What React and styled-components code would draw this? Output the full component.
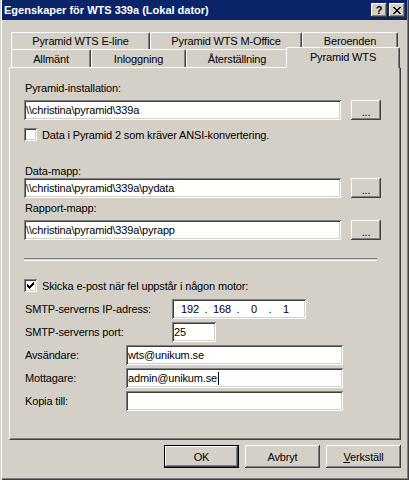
import styled, { createGlobalStyle } from "styled-components"

const GlobalStyle = createGlobalStyle`
  html, body {
    margin: 0;
    padding: 0;
    background: #D4D0C8;
  }
  body {
    font-family: "Liberation Sans", Arial, sans-serif;
    font-size: 11px;
    color: #000;
  }
`

const raised = `
  box-shadow: inset -1px -1px #404040, inset 1px 1px #ffffff,
    inset -2px -2px #808080, inset 2px 2px #D4D0C8;
`

const sunken = `
  box-shadow: inset 1px 1px #808080, inset -1px -1px #ffffff,
    inset 2px 2px #404040, inset -2px -2px #D4D0C8;
`

const Window = styled.div`
  width: 409px;
  height: 480px;
  box-sizing: border-box;
  padding: 0 2px 2px 2px;
  background: #D4D0C8;
  display: flex;
  flex-direction: column;
  box-shadow: inset 1px 0 #D4D0C8, inset 2px 0 #ffffff,
    inset -1px -1px #404040, inset -2px -2px #808080;
  letter-spacing: -0.15px;
`

const TitleBar = styled.div`
  height: 20px;
  background: #0A246A;
  display: flex;
  align-items: center;
  padding: 0 2px 0 2px;
  color: #fff;
  font-weight: bold;
  font-size: 11px;
  letter-spacing: 0;
`

const Title = styled.div`
  flex: 1;
`

const CaptionButton = styled.div`
  width: 16px;
  height: 14px;
  margin-left: 2px;
  background: #D4D0C8;
  ${raised}
  display: flex;
  align-items: center;
  justify-content: center;
  color: #000;
  font-size: 11px;
  font-weight: bold;
`

const Body = styled.div`
  flex: 1;
  display: flex;
  flex-direction: column;
  padding: 12px 6px 0 7px;
`

const TabStrip = styled.div`
  padding-left: 2px;
  display: flex;
  flex-direction: column;
`

const TabRow = styled.div`
  display: flex;
  align-items: flex-end;
  height: ${p => p.$height}px;
  margin-top: ${p => p.$mt || 0}px;
  position: relative;
  z-index: ${p => p.$z || 0};
`

const Tab = styled.div`
  box-sizing: border-box;
  width: ${p => p.$w}px;
  height: ${p => (p.$active ? 21 : p.$h || 18)}px;
  margin: ${p => (p.$active ? "0 -2px -1px -2px" : "0")};
  position: relative;
  z-index: ${p => (p.$active ? 2 : 1)};
  background: #D4D0C8;
  border-top: 1px solid #ffffff;
  border-left: 1px solid #ffffff;
  border-right: 1px solid #404040;
  border-radius: 2px 2px 0 0;
  box-shadow: inset -1px 0 #808080;
  display: flex;
  align-items: center;
  justify-content: center;
  padding-bottom: ${p => (p.$active ? 3 : 0)}px;
  white-space: nowrap;
`

const Panel = styled.div`
  box-sizing: border-box;
  width: 392px;
  height: 373px;
  border-top: 1px solid #ffffff;
  border-left: 1px solid #ffffff;
  border-right: 1px solid #404040;
  border-bottom: 1px solid #404040;
  box-shadow: inset -1px -1px #808080;
  padding-left: 14px;
  display: flex;
  flex-direction: column;
`

const Label = styled.div`
  height: 13px;
  line-height: 13px;
  padding-left: 1px;
  margin-top: ${p => p.$mt || 0}px;
  white-space: nowrap;
`

const PathRow = styled.div`
  display: flex;
  align-items: center;
  gap: 10px;
  height: 20px;
  margin-top: ${p => p.$mt || 0}px;
`

const Field = styled.div`
  box-sizing: border-box;
  width: ${p => p.$w}px;
  height: 20px;
  background: #ffffff;
  ${sunken}
  padding: 0 2px 0 ${p => p.$pl ?? 2}px;
  display: flex;
  align-items: center;
  white-space: nowrap;
  overflow: hidden;
`

const Caret = styled.span`
  display: inline-block;
  width: 1px;
  height: 13px;
  background: #000;
  margin-left: 1px;
`

const Button = styled.div`
  box-sizing: border-box;
  width: ${p => p.$w}px;
  height: ${p => p.$h}px;
  background: #D4D0C8;
  ${raised}
  border: ${p => (p.$default ? "1px solid #000" : "none")};
  display: flex;
  align-items: center;
  justify-content: center;
  padding-top: ${p => p.$pt || 0}px;
`

const CheckRow = styled.div`
  display: flex;
  align-items: center;
  height: 13px;
  margin-top: ${p => p.$mt || 0}px;
  white-space: nowrap;
`

const CheckBox = styled.div`
  box-sizing: border-box;
  width: 13px;
  height: 13px;
  background: #ffffff;
  ${sunken}
  margin-right: 5px;
  display: flex;
  align-items: center;
  justify-content: center;
`

const Separator = styled.div`
  width: 353px;
  height: 1px;
  border-top: 1px solid #808080;
  border-bottom: 1px solid #ffffff;
  margin-top: ${p => p.$mt || 0}px;
`

const FormRow = styled.div`
  display: grid;
  grid-template-columns: ${p => p.$labelW}px auto;
  align-items: center;
  height: 20px;
  margin-top: ${p => p.$mt || 0}px;
`

const RowLabel = styled.div`
  padding-left: 1px;
  white-space: nowrap;
`

const IpField = styled(Field)`
  padding-left: 6px;
`

const IpPart = styled.span`
  width: 24px;
  text-align: center;
`

const IpDot = styled.span`
  width: 8px;
  text-align: center;
`

const ButtonRow = styled.div`
  display: flex;
  justify-content: flex-end;
  gap: 6px;
  margin-top: 5px;
`

function CheckMark() {
  return (
    <svg width="7" height="7" viewBox="0 0 7 7" shapeRendering="crispEdges">
      <path d="M6 0h1v3h-1v1h-1v1h-1v1h-1v1h-1v-1h-1v-1h-1v-3h1v1h1v1h1v-1h1v-1h1z" fill="#000" />
    </svg>
  )
}

function CloseGlyph() {
  return (
    <svg width="8" height="7" viewBox="0 0 8 7" shapeRendering="crispEdges">
      <path d="M0 0h2v1h1v1h2v-1h1v-1h2v1h-1v1h-1v1h-1v1h1v1h1v1h1v1h-2v-1h-1v-1h-2v1h-1v1h-2v-1h1v-1h1v-1h1v-1h-1v-1h-1v-1h-1z" fill="#000" />
    </svg>
  )
}

function IpAddress({ parts }) {
  return (
    <IpField $w={134}>
      {parts.map((p, i) => (
        <span key={i} style={{ display: "contents" }}>
          {i > 0 && <IpDot>.</IpDot>}
          <IpPart>{p}</IpPart>
        </span>
      ))}
    </IpField>
  )
}

export default function App() {
  return (
    <>
      <GlobalStyle />
      <Window>
        <TitleBar>
          <Title>Egenskaper för WTS 339a (Lokal dator)</Title>
          <CaptionButton>?</CaptionButton>
          <CaptionButton><CloseGlyph /></CaptionButton>
        </TitleBar>
        <Body>
          <TabStrip>
            <TabRow $height={17}>
              <Tab $w={139} $h={17}>Pyramid WTS E-line</Tab>
              <Tab $w={152} $h={17}>Pyramid WTS M-Office</Tab>
              <Tab $w={96} $h={17}>Beroenden</Tab>
            </TabRow>
            <TabRow $height={20} $mt={-2} $z={1}>
              <Tab $w={80}>Allmänt</Tab>
              <Tab $w={95}>Inloggning</Tab>
              <Tab $w={102}>Återställning</Tab>
              <Tab $w={114} $active>Pyramid WTS</Tab>
            </TabRow>
          </TabStrip>
          <Panel>
            <Label $mt={14}>Pyramid-installation:</Label>
            <PathRow $mt={5}>
              <Field $w={317}>\\christina\pyramid\339a</Field>
              <Button $w={30} $h={20} $pt={3}>...</Button>
            </PathRow>
            <CheckRow $mt={8}>
              <CheckBox />
              Data i Pyramid 2 som kräver ANSI-konvertering.
            </CheckRow>
            <Label $mt={24}>Data-mapp:</Label>
            <PathRow>
              <Field $w={317}>\\christina\pyramid\339a\pydata</Field>
              <Button $w={30} $h={20} $pt={3}>...</Button>
            </PathRow>
            <Label $mt={4}>Rapport-mapp:</Label>
            <PathRow $mt={5}>
              <Field $w={317}>\\christina\pyramid\339a\pyrapp</Field>
              <Button $w={30} $h={20} $pt={3}>...</Button>
            </PathRow>
            <Separator $mt={18} />
            <CheckRow $mt={18}>
              <CheckBox><CheckMark /></CheckBox>
              Skicka e-post när fel uppstår i någon motor:
            </CheckRow>
            <FormRow $labelW={148} $mt={7}>
              <RowLabel>SMTP-serverns IP-adress:</RowLabel>
              <IpAddress parts={["192", "168", "0", "1"]} />
            </FormRow>
            <FormRow $labelW={148} $mt={3}>
              <RowLabel>SMTP-serverns port:</RowLabel>
              <Field $w={44}>25</Field>
            </FormRow>
            <FormRow $labelW={102} $mt={3}>
              <RowLabel>Avsändare:</RowLabel>
              <Field $w={217}>wts@unikum.se</Field>
            </FormRow>
            <FormRow $labelW={102} $mt={3}>
              <RowLabel>Mottagare:</RowLabel>
              <Field $w={217}>admin@unikum.se<Caret /></Field>
            </FormRow>
            <FormRow $labelW={102} $mt={3}>
              <RowLabel>Kopia till:</RowLabel>
              <Field $w={217}></Field>
            </FormRow>
          </Panel>
          <ButtonRow>
            <Button $w={75} $h={23} $default>OK</Button>
            <Button $w={75} $h={23}>Avbryt</Button>
            <Button $w={75} $h={23}><span><u>V</u>erkställ</span></Button>
          </ButtonRow>
        </Body>
      </Window>
    </>
  )
}
